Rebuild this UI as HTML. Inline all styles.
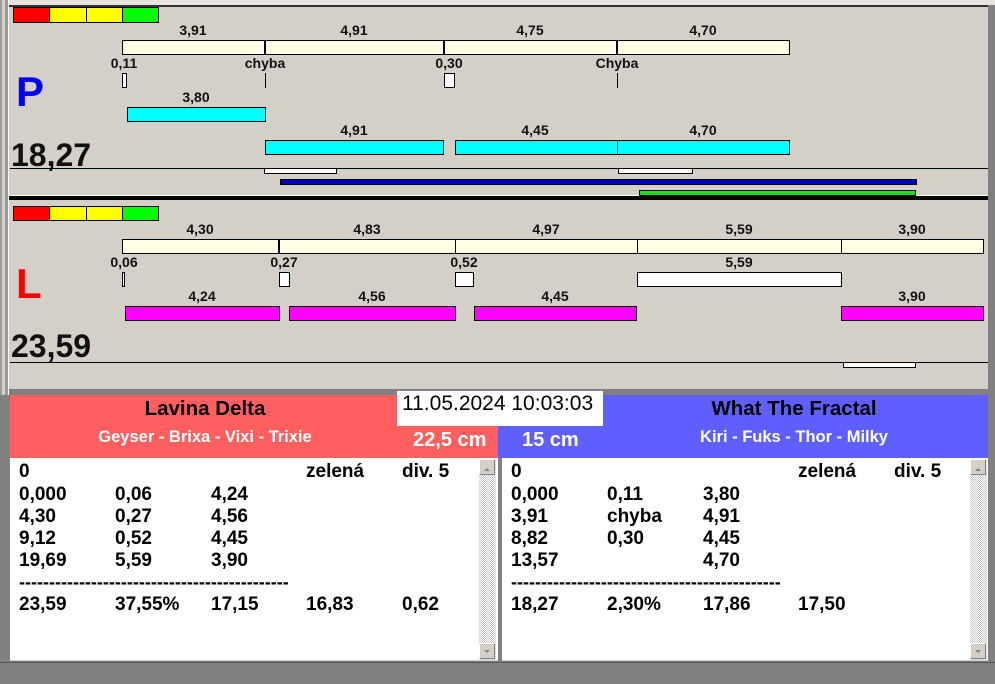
<!DOCTYPE html>
<html><head><meta charset="utf-8">
<style>
*{margin:0;padding:0;box-sizing:border-box}
body{width:995px;height:684px;position:relative;overflow:hidden;background:#808080;font-family:"Liberation Sans",Arial,sans-serif}
div{position:absolute}
.b{border:1px solid #000}
.cr{background:#fffde2}
.cy{background:#00ffff}
.mg{background:#ff00ff}
.w{background:#fff}
.t{width:80px;text-align:center;font-weight:bold;font-size:14px;color:#111;line-height:14px}
.v{width:1px;background:#000}
.row{font-weight:bold;font-size:19px;line-height:22px;color:#000;white-space:pre}
.row span{position:absolute}
.sb{background:repeating-conic-gradient(#c8c8c8 0 25%,#fff 0 50%) 0 0/2px 2px}
.btn{background:#d4d0c8;border:1px solid;border-color:#fff #808080 #808080 #fff;width:16px;height:16px}
.up::after{content:"";position:absolute;left:4px;top:5px;border:3px solid transparent;border-bottom:3px solid #808080;border-left-width:3.5px;border-right-width:3.5px}
.dn::after{content:"";position:absolute;left:4px;top:6px;border:3px solid transparent;border-top:3px solid #808080;border-left-width:3.5px;border-right-width:3.5px}
</style></head><body>
<div style="left:0;top:0;width:995px;height:5px;background:#e8e4dc"></div>
<div style="left:0;top:0;width:9px;height:395px;background:#9a9a9a;border-right:1px solid #fff"></div>
<div style="left:2px;top:0;width:3px;height:395px;background:#d4d0c8"></div>
<div style="left:988px;top:5px;width:7px;height:390px;background:#808080"></div>
<div style="left:9px;top:5px;width:979px;height:191px;background:#d4d0c8;border-top:2px solid #333"></div>
<div style="left:9px;top:199px;width:979px;height:190px;background:#d4d0c8"></div>
<div style="left:9px;top:195px;width:979px;height:5px;background:#000;border-top:1px solid #fff"></div>

<div class="b" style="left:13px;top:7px;width:37px;height:16px;background:#f00"></div>
<div class="b" style="left:49px;top:7px;width:38px;height:16px;background:#ff0"></div>
<div class="b" style="left:86px;top:7px;width:37px;height:16px;background:#ff0"></div>
<div class="b" style="left:122px;top:7px;width:37px;height:16px;background:#0f0"></div>
<div class="b" style="left:13px;top:206px;width:37px;height:15px;background:#f00"></div>
<div class="b" style="left:49px;top:206px;width:38px;height:15px;background:#ff0"></div>
<div class="b" style="left:86px;top:206px;width:37px;height:15px;background:#ff0"></div>
<div class="b" style="left:122px;top:206px;width:37px;height:15px;background:#0f0"></div>

<div class="t" style="left:153px;top:23px">3,91</div>
<div class="t" style="left:314px;top:23px">4,91</div>
<div class="t" style="left:490px;top:23px">4,75</div>
<div class="t" style="left:663px;top:23px">4,70</div>
<div class="b cr" style="left:122px;top:40px;width:668px;height:15px"></div>
<div class="v" style="left:264px;top:40px;height:15px;width:2px"></div>
<div class="v" style="left:443px;top:40px;height:15px;width:2px"></div>
<div class="v" style="left:616px;top:40px;height:15px;width:2px"></div>
<div class="t" style="left:84px;top:56px">0,11</div>
<div class="t" style="left:225px;top:56px">chyba</div>
<div class="t" style="left:409px;top:56px">0,30</div>
<div class="t" style="left:577px;top:56px">Chyba</div>
<div class="b w" style="left:122px;top:73px;width:5px;height:15px"></div>
<div class="v" style="left:265px;top:73px;height:15px"></div>
<div class="b w" style="left:444px;top:73px;width:11px;height:15px"></div>
<div class="v" style="left:617px;top:73px;height:15px"></div>
<div style="left:16px;top:70px;font-size:42px;font-weight:bold;color:#0000ff;line-height:44px">P</div>
<div class="t" style="left:156px;top:90px">3,80</div>
<div class="b cy" style="left:127px;top:107px;width:139px;height:15px"></div>
<div class="t" style="left:314px;top:123px">4,91</div>
<div class="t" style="left:495px;top:123px">4,45</div>
<div class="t" style="left:663px;top:123px">4,70</div>
<div class="b cy" style="left:265px;top:140px;width:179px;height:15px"></div>
<div class="b cy" style="left:455px;top:140px;width:163px;height:15px"></div>
<div class="b cy" style="left:617px;top:140px;width:173px;height:15px"></div>
<div style="left:11px;top:138px;font-size:32px;font-weight:bold;line-height:34px;color:#111">18,27</div>
<div style="left:10px;top:168px;width:978px;height:1px;background:#000"></div>
<div class="b w" style="left:264px;top:168px;width:73px;height:6px"></div>
<div class="b w" style="left:618px;top:168px;width:75px;height:6px"></div>
<div class="b" style="left:280px;top:179px;width:637px;height:6px;background:#0000c0"></div>
<div class="b" style="left:639px;top:190px;width:277px;height:6px;background:#22dd22"></div>

<div class="t" style="left:160px;top:222px">4,30</div>
<div class="t" style="left:327px;top:222px">4,83</div>
<div class="t" style="left:506px;top:222px">4,97</div>
<div class="t" style="left:699px;top:222px">5,59</div>
<div class="t" style="left:872px;top:222px">3,90</div>
<div class="b cr" style="left:122px;top:239px;width:862px;height:15px"></div>
<div class="v" style="left:278px;top:239px;height:15px;width:2px"></div>
<div class="v" style="left:455px;top:239px;height:15px"></div>
<div class="v" style="left:637px;top:239px;height:15px"></div>
<div class="v" style="left:841px;top:239px;height:15px"></div>
<div class="t" style="left:84px;top:255px">0,06</div>
<div class="t" style="left:244px;top:255px">0,27</div>
<div class="t" style="left:424px;top:255px">0,52</div>
<div class="t" style="left:699px;top:255px">5,59</div>
<div class="b w" style="left:122px;top:272px;width:3px;height:15px"></div>
<div class="b w" style="left:279px;top:272px;width:11px;height:15px"></div>
<div class="b w" style="left:455px;top:272px;width:19px;height:15px"></div>
<div class="b w" style="left:637px;top:272px;width:205px;height:15px"></div>
<div style="left:16px;top:262px;font-size:42px;font-weight:bold;color:#ff0000;line-height:44px">L</div>
<div class="t" style="left:162px;top:289px">4,24</div>
<div class="t" style="left:332px;top:289px">4,56</div>
<div class="t" style="left:515px;top:289px">4,45</div>
<div class="t" style="left:872px;top:289px">3,90</div>
<div class="b mg" style="left:125px;top:306px;width:155px;height:15px"></div>
<div class="b mg" style="left:289px;top:306px;width:167px;height:15px"></div>
<div class="b mg" style="left:474px;top:306px;width:163px;height:15px"></div>
<div class="b mg" style="left:841px;top:306px;width:143px;height:15px"></div>
<div style="left:11px;top:329px;font-size:32px;font-weight:bold;line-height:34px;color:#111">23,59</div>
<div style="left:10px;top:362px;width:978px;height:1px;background:#000"></div>
<div class="b w" style="left:843px;top:362px;width:73px;height:6px"></div>

<div style="left:10px;top:395px;width:488px;height:63px;background:#ff5f5f"></div>
<div style="left:498px;top:395px;width:490px;height:63px;background:#5f5fff"></div>
<div style="left:10px;top:397px;width:390px;text-align:center;font-size:20.5px;font-weight:bold;line-height:24px">Lavina Delta</div>
<div style="left:10px;top:428px;width:390px;text-align:center;font-size:16.5px;font-weight:bold;color:#fff;line-height:18px">Geyser - Brixa - Vixi - Trixie</div>
<div style="left:413px;top:428px;font-size:20px;font-weight:bold;color:#fff;line-height:24px">22,5 cm</div>
<div style="left:522px;top:428px;font-size:20px;font-weight:bold;color:#fff;line-height:24px">15 cm</div>
<div style="left:600px;top:397px;width:388px;text-align:center;font-size:20.5px;font-weight:bold;line-height:24px">What The Fractal</div>
<div style="left:600px;top:428px;width:388px;text-align:center;font-size:16.5px;font-weight:bold;color:#fff;line-height:18px">Kiri - Fuks - Thor - Milky</div>
<div style="left:397px;top:391px;width:206px;height:35px;background:#fff;font-size:21px;line-height:26px;padding-left:5px;white-space:nowrap">11.05.2024 10:03:03</div>

<div style="left:10px;top:458px;width:488px;height:203px;background:#fff;border-bottom:1px solid #ccc"></div>
<div class="sb" style="left:479px;top:459px;width:17px;height:201px"></div>
<div class="btn up" style="left:479px;top:459px"></div>
<div class="btn dn" style="left:479px;top:643px"></div>
<div style="left:498px;top:458px;width:4px;height:204px;background:#808080"></div>
<div style="left:502px;top:458px;width:486px;height:203px;background:#fff;border-bottom:1px solid #ccc"></div>
<div class="sb" style="left:970px;top:459px;width:17px;height:201px"></div>
<div class="btn up" style="left:970px;top:459px"></div>
<div class="btn dn" style="left:970px;top:643px"></div>
<div style="left:988px;top:458px;width:7px;height:226px;background:#808080"></div>
<div style="left:0;top:662px;width:995px;height:22px;background:#808080;border-top:1px solid #555"></div>

<div class="row" style="left:19px;top:461px;width:470px;height:170px">
<span style="left:0;top:0">0</span><span style="left:287px;top:0">zelená</span><span style="left:383px;top:0">div. 5</span>
<span style="left:0;top:23px">0,000</span><span style="left:96px;top:23px">0,06</span><span style="left:192px;top:23px">4,24</span>
<span style="left:0;top:45px">4,30</span><span style="left:96px;top:45px">0,27</span><span style="left:192px;top:45px">4,56</span>
<span style="left:0;top:67px">9,12</span><span style="left:96px;top:67px">0,52</span><span style="left:192px;top:67px">4,45</span>
<span style="left:0;top:89px">19,69</span><span style="left:96px;top:89px">5,59</span><span style="left:192px;top:89px">3,90</span>
<span style="left:0;top:110px;font-size:18px">---------------------------------------------</span>
<span style="left:0;top:133px">23,59</span><span style="left:96px;top:133px">37,55%</span><span style="left:192px;top:133px">17,15</span><span style="left:287px;top:133px">16,83</span><span style="left:383px;top:133px">0,62</span>
</div>
<div class="row" style="left:511px;top:461px;width:460px;height:170px">
<span style="left:0;top:0">0</span><span style="left:287px;top:0">zelená</span><span style="left:383px;top:0">div. 5</span>
<span style="left:0;top:23px">0,000</span><span style="left:96px;top:23px">0,11</span><span style="left:192px;top:23px">3,80</span>
<span style="left:0;top:45px">3,91</span><span style="left:96px;top:45px">chyba</span><span style="left:192px;top:45px">4,91</span>
<span style="left:0;top:67px">8,82</span><span style="left:96px;top:67px">0,30</span><span style="left:192px;top:67px">4,45</span>
<span style="left:0;top:89px">13,57</span><span style="left:192px;top:89px">4,70</span>
<span style="left:0;top:110px;font-size:18px">---------------------------------------------</span>
<span style="left:0;top:133px">18,27</span><span style="left:96px;top:133px">2,30%</span><span style="left:192px;top:133px">17,86</span><span style="left:287px;top:133px">17,50</span>
</div>
</body></html>
